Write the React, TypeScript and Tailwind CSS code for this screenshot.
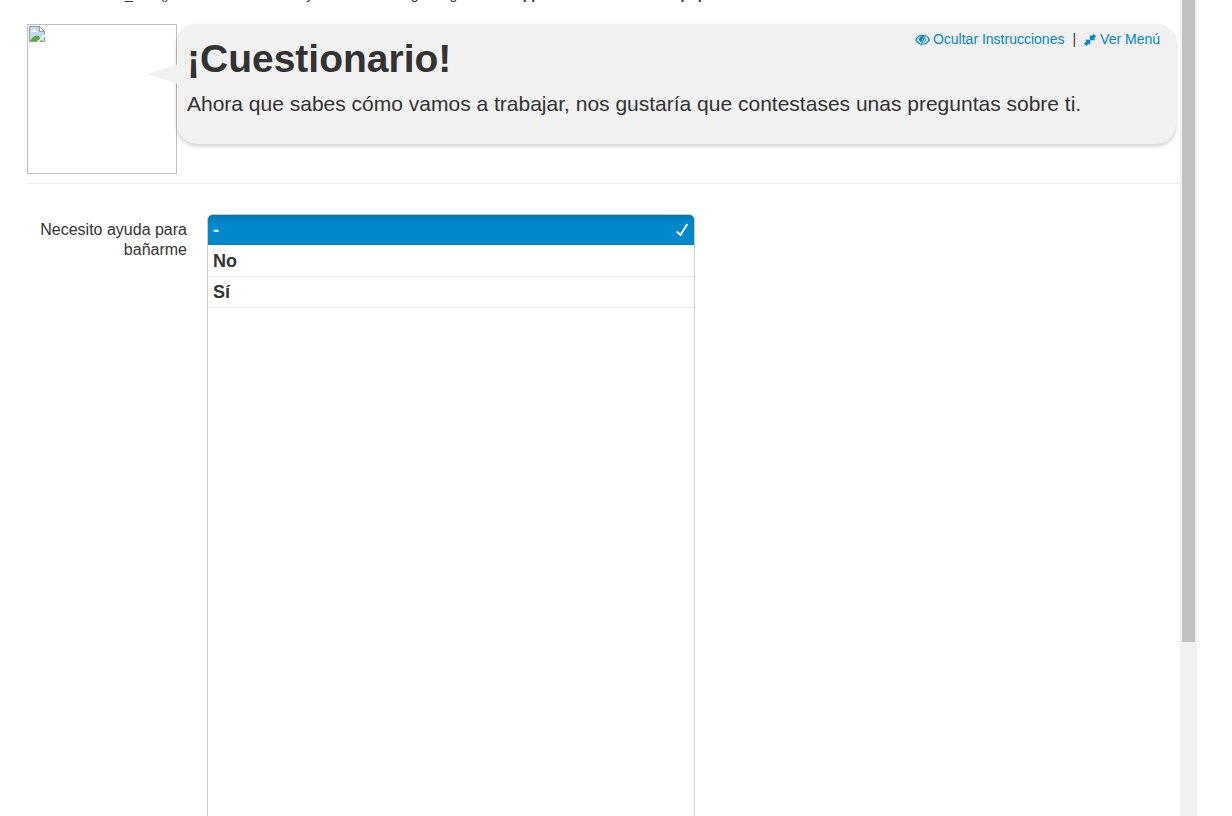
import { useState } from "react";

function EyeCloseIcon() {
  return (
    <svg viewBox="0 0 15 12" className="mr-[3px] inline-block h-3 w-[15px] align-[-2px]" fill="none" stroke="currentColor" aria-hidden="true">
      <path d="M9 1.600C5.500.8 2.400 2.700.9 6c.9 1.900 2.300 3.200 4.300 3.900" strokeWidth="1.4" />
      <path d="M9 2C6 1.500 4 3 4 5.200c0 1.400.8 2.600 2 3z" fill="currentColor" stroke="none" />
      <path d="M10.800.4 5.700 11.600" strokeWidth="1.3" />
      <path d="M11.700 2.300c1.100.8 1.900 2.100 2.500 3.700-1.300 2.500-3.300 3.900-6.200 4.200" strokeWidth="1.3" />
      <path d="M11.100 4c.6 1.800-.2 3.500-2.300 4.500z" fill="currentColor" stroke="none" />
    </svg>
  );
}

function ResizeSmallIcon() {
  return (
    <svg viewBox="0 0 12 12" className="mr-1 inline-block size-3 align-[-2px]" fill="currentColor" aria-hidden="true">
      <path d="M1 5.800h5.200V11L4.700 9.600 2.200 12 0 9.800l2.500-2.500zM11.200 6.200H5.800V.8l1.600 1.500L9.800 0 12 2.200 9.700 4.600z" />
    </svg>
  );
}

function CheckIcon() {
  return (
    <svg viewBox="0 0 12 14" className="mr-px h-3.5 w-3" fill="none" stroke="white" strokeWidth="2" aria-hidden="true">
      <path d="M.6 8.500 4.500 12 11.300 1" />
    </svg>
  );
}

function MissingPicture() {
  return (
    <div role="img" aria-label="Imagen no disponible" className="size-[150px] shrink-0 border border-[#c0c0c0] p-px">
      <svg viewBox="0 0 16 16" className="size-4">
        <path d="M.5.500h10l5 5v10H.5z" fill="#c5d7f5" stroke="#999" />
        <path d="M2 6c0-1 1-1.500 2-1 0-2 3-2 3 0 1 0 1.500.500 1.500 1z" fill="#fff" />
        <path d="M1 15c1.500-3 4-5.500 7-5.500 2 0 4 2.500 5 5.500z" fill="#56ac35" />
        <path d="M10.500.500v5h5z" fill="#fff" stroke="#999" />
        <path d="M16 8v2.500L10 16H7.500z" fill="#fff" />
      </svg>
    </div>
  );
}

const options = ["-", "No", "Sí"];

function OptionList() {
  const [value, setValue] = useState("-");
  return (
    <div
      role="radiogroup"
      aria-labelledby="pregunta"
      className="min-h-[800px] overflow-hidden rounded-md border border-[#ccc] text-lg font-bold"
    >
      {options.map((option) => (
        <div key={option} className="border-b border-[#e9e9e9] first:border-white">
          <label
            className={
              option === value
                ? "flex h-[30px] items-center justify-between bg-[#0088cc] bg-linear-to-b from-[#0079b6] to-[#0088cc] to-30% px-[5px] text-white"
                : "flex h-[30px] items-center justify-between bg-white px-[5px]"
            }
          >
            <input
              type="radio"
              name="ayuda"
              value={option}
              checked={option === value}
              onChange={() => setValue(option)}
              className="sr-only"
            />
            <span>{option}</span>
            {option === value && <CheckIcon />}
          </label>
        </div>
      ))}
    </div>
  );
}

export default function App() {
  return (
    <div className="flex h-screen overflow-hidden bg-white pr-[35px] font-['Liberation_Sans',Arial,sans-serif] text-[#333]">
      <main className="min-w-0 flex-1 overflow-hidden pl-[27px]">
        <p className="-mt-3.5 mb-[22px] h-4 text-sm leading-4 whitespace-nowrap">
          <b>Notice</b>: session_start(): A session had already been started - ignoring in{" "}
          <b>C:\xampp\htdocs\cuestionario.php</b> on line <b>3</b>
        </p>
        <header className="flex items-start border-b border-[#eee] pb-[9px]">
          <MissingPicture />
          <section className="relative mr-1 h-[120px] flex-1 rounded-[20px] bg-[#f1f1f1] px-2.5 pt-3 shadow-[0_2px_4px_rgba(0,0,0,0.2)]">
            <svg viewBox="0 0 30 20" className="absolute top-10 -left-[29px] h-5 w-[30px]" fill="#f1f1f1" aria-hidden="true">
              <path d="M0 10 30 0v20z" />
            </svg>
            <nav className="absolute top-[5px] right-4 text-sm leading-5">
              <a href="#instrucciones" className="text-[#0088cc]"><EyeCloseIcon />Ocultar Instrucciones</a>
              <span className="mx-2">|</span>
              <a href="#menu" className="text-[#0088cc]"><ResizeSmallIcon />Ver Menú</a>
            </nav>
            <h1 className="text-[39px] leading-[46px] font-bold">¡Cuestionario!</h1>
            <p className="mt-2 text-[21px] leading-7">
              Ahora que sabes cómo vamos a trabajar, nos gustaría que contestases unas preguntas sobre ti.
            </p>
          </section>
        </header>
        <form className="grid grid-cols-[160px_488px] gap-5 pt-[30px]">
          <div id="pregunta" className="pt-1.5 text-right text-base leading-5">Necesito ayuda para bañarme</div>
          <OptionList />
        </form>
      </main>
      <div className="w-[17px] shrink-0 bg-[#f1f1f1] px-0.5" aria-hidden="true">
        <div className="h-[642px] bg-[#c1c1c1]" />
      </div>
    </div>
  );
}
